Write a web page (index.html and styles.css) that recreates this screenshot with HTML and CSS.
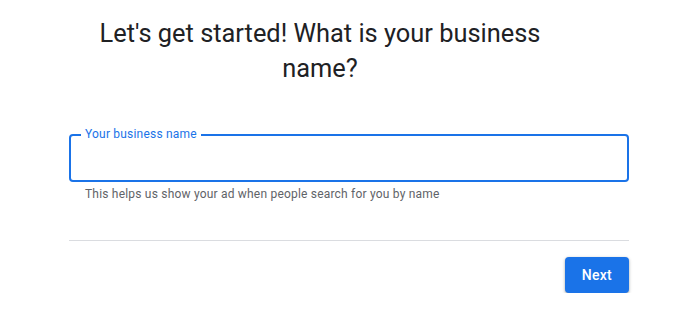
FILE: index.html
```html
<!DOCTYPE html>
<html lang="en">
<head>
    <meta charset="UTF-8">
    <meta name="viewport" content="width=device-width, initial-scale=1.0">
    <title>Business name</title>
    <link rel="stylesheet" href="styles.css">
</head>
<body>
    <div class="page">
        <h1 class="title">Let's get started! What is your business name?</h1>
        <div class="field">
            <label class="field-label" for="bizName">Your business name</label>
            <input class="field-input" id="bizName" type="text">
        </div>
        <p class="hint">This helps us show your ad when people search for you by name</p>
        <hr class="divider">
        <div class="actions">
            <button class="next-btn">Next</button>
        </div>
    </div>
</body>
</html>
```

FILE: styles.css
```css
body {
    margin: 0;
    font-family: Roboto, "Liberation Sans", Arial, sans-serif;
    background: #fff;
    color: #202124;
}
.page {
    width: 560px;
    margin-left: 69px;
}
.title {
    width: 480px;
    margin: 16px 0 0 11px;
    text-align: center;
    font-size: 25.4px;
    font-weight: 400;
    line-height: 35px;
    color: #202124;
}
.field {
    position: relative;
    margin-top: 48px;
}
.field-label {
    position: absolute;
    top: -8px;
    left: 12px;
    padding: 0 4px;
    background: #fff;
    font-size: 12px;
    line-height: 16px;
    letter-spacing: 0.2px;
    color: #1a73e8;
}
.field-input {
    display: block;
    box-sizing: border-box;
    width: 560px;
    height: 48px;
    border: 2px solid #1a73e8;
    border-radius: 4px;
    outline: none;
    padding: 0 14px;
    font-size: 16px;
    font-family: inherit;
}
.hint {
    margin: 4px 0 0 16px;
    font-size: 12px;
    line-height: 16px;
    letter-spacing: 0.2px;
    color: #5f6368;
}
.divider {
    margin: 38px 0 0;
    border: 0;
    border-top: 1px solid #dadce0;
}
.actions {
    display: flex;
    justify-content: flex-end;
    margin-top: 16px;
}
.next-btn {
    height: 36px;
    padding: 0 17px;
    border: 0;
    border-radius: 4px;
    background: #1a73e8;
    color: #fff;
    font-family: inherit;
    font-size: 14px;
    font-weight: 500;
    letter-spacing: 0.25px;
    box-shadow: 0 1px 2px rgba(60, 64, 67, 0.3), 0 1px 3px 1px rgba(60, 64, 67, 0.15);
    cursor: pointer;
}
```
